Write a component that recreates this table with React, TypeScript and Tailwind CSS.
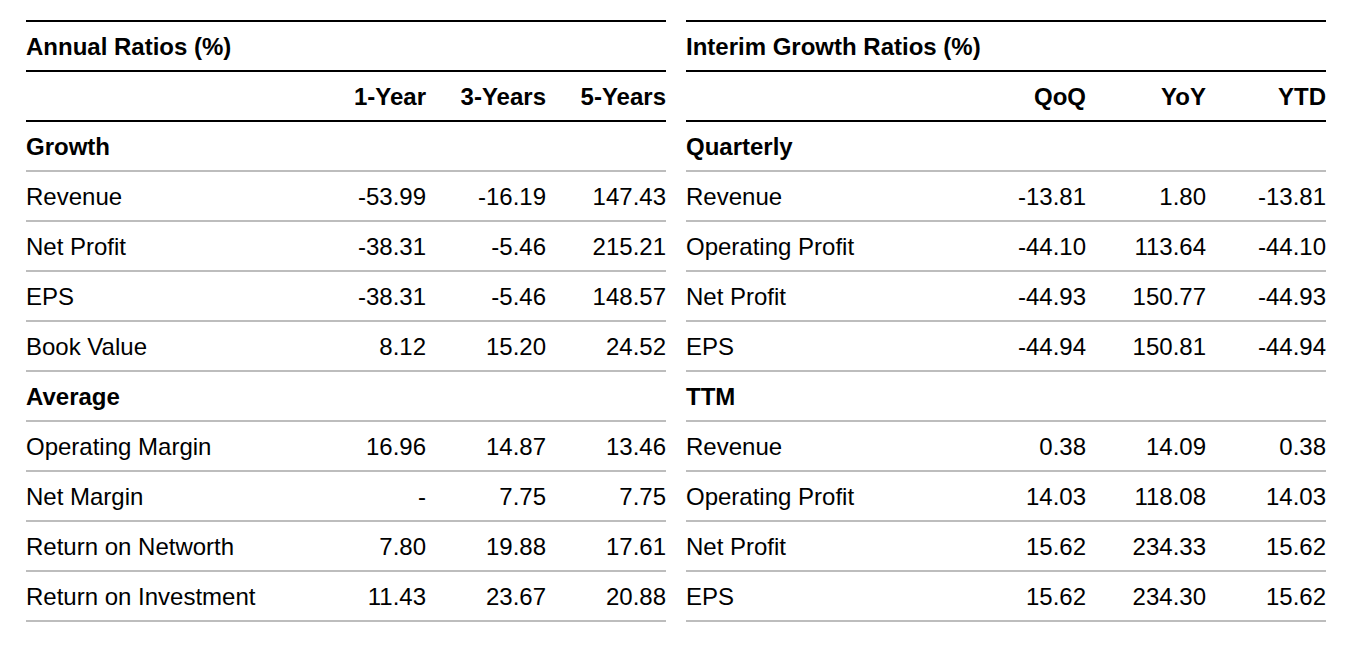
type Row = { label: string; values?: string[]; section?: boolean };

const annual: Row[] = [
  { label: "Growth", section: true },
  { label: "Revenue", values: ["-53.99", "-16.19", "147.43"] },
  { label: "Net Profit", values: ["-38.31", "-5.46", "215.21"] },
  { label: "EPS", values: ["-38.31", "-5.46", "148.57"] },
  { label: "Book Value", values: ["8.12", "15.20", "24.52"] },
  { label: "Average", section: true },
  { label: "Operating Margin", values: ["16.96", "14.87", "13.46"] },
  { label: "Net Margin", values: ["-", "7.75", "7.75"] },
  { label: "Return on Networth", values: ["7.80", "19.88", "17.61"] },
  { label: "Return on Investment", values: ["11.43", "23.67", "20.88"] },
];

const interim: Row[] = [
  { label: "Quarterly", section: true },
  { label: "Revenue", values: ["-13.81", "1.80", "-13.81"] },
  { label: "Operating Profit", values: ["-44.10", "113.64", "-44.10"] },
  { label: "Net Profit", values: ["-44.93", "150.77", "-44.93"] },
  { label: "EPS", values: ["-44.94", "150.81", "-44.94"] },
  { label: "TTM", section: true },
  { label: "Revenue", values: ["0.38", "14.09", "0.38"] },
  { label: "Operating Profit", values: ["14.03", "118.08", "14.03"] },
  { label: "Net Profit", values: ["15.62", "234.33", "15.62"] },
  { label: "EPS", values: ["15.62", "234.30", "15.62"] },
];

function RatioTable({ title, cols, rows }: { title: string; cols: string[]; rows: Row[] }) {
  return (
    <div className="w-[640px] border-t-2 border-black">
      <div className="flex h-[50px] items-center border-b-2 border-black pt-[2px] font-bold">{title}</div>
      <div className="grid h-[50px] grid-cols-[280px_120px_120px_120px] items-center border-b-2 border-black pt-[2px] font-bold">
        <div />
        {cols.map((c) => (
          <div key={c} className="text-right">{c}</div>
        ))}
      </div>
      {rows.map((r, i) => (
        <div
          key={i}
          className={
            "grid h-[50px] grid-cols-[280px_120px_120px_120px] items-center border-b-2 border-[#bdbdbd] pt-[2px]" +
            (r.section ? " font-bold" : "")
          }
        >
          <div>{r.label}</div>
          {r.values?.map((v, j) => (
            <div key={j} className="text-right">{v}</div>
          ))}
        </div>
      ))}
    </div>
  );
}

export default function App() {
  return (
    <div className="min-h-[648px] bg-white pl-[26px] pt-[20px] text-[24px] leading-none text-black font-['Liberation_Sans',Arial,sans-serif]">
      <div className="flex gap-[20px]">
        <RatioTable title="Annual Ratios (%)" cols={["1-Year", "3-Years", "5-Years"]} rows={annual} />
        <RatioTable title="Interim Growth Ratios (%)" cols={["QoQ", "YoY", "YTD"]} rows={interim} />
      </div>
    </div>
  );
}
